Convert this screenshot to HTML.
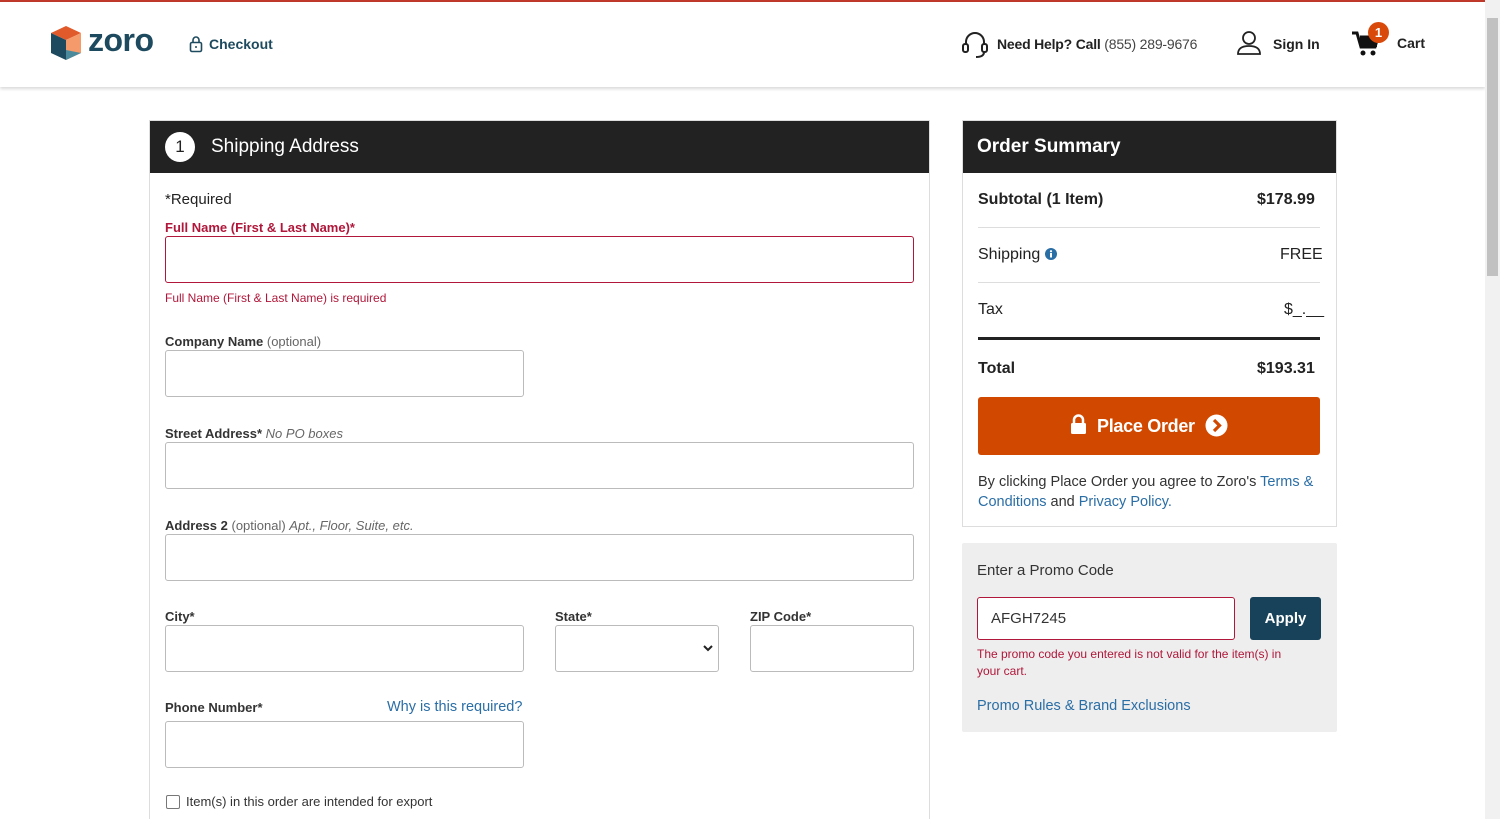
<!DOCTYPE html>
<html style="overflow:hidden;height:819px"><head><meta charset="utf-8"><style>
*{box-sizing:border-box;margin:0;padding:0}
body{width:1500px;height:819px;overflow:hidden;background:#fff;font-family:"Liberation Sans",sans-serif;color:#222;position:relative}
.abs{position:absolute}
.topline{left:0;top:0;width:1485px;height:2px;background:#c0392b}
.header{left:0;top:2px;width:1485px;height:85px;background:#fff;box-shadow:0 2px 3px rgba(0,0,0,.15)}
.sb{left:1485px;top:0;width:15px;height:819px;background:#f1f1f1}
.thumb{left:1487px;top:18px;width:11px;height:258px;background:#c1c1c1}
.panel{border:1px solid #ddd;background:#fff}
.ph{background:#222;color:#fff;font-size:20px;height:52px}
.lbl{font-size:13px;font-weight:bold;color:#333}
.lbl span{font-weight:normal;color:#666}
.inp{border:1px solid #bbb;border-radius:3px;background:#fff}
a,.link{color:#2a6ea6}
</style></head><body>
<div class="abs topline"></div>
<div class="abs header">
 <svg class="abs" style="left:50px;top:24px" width="32" height="34" viewBox="0 0 32 34">
  <polygon points="16,0 31,7 16,14 1,7" fill="#e05a2b"/>
  <polygon points="1,7 16,14 16,34 1,27" fill="#1d4a5e"/>
  <polygon points="16,14 31,7 31,27 16,34" fill="#f59a6a"/>
  <polygon points="16,24 31,27 16,34" fill="#4b8a9c"/>
 </svg>
 <div class="abs" style="left:88px;top:20px;font-size:32px;font-weight:bold;color:#1d4a5e;letter-spacing:-0.5px">zoro</div>
 <svg class="abs" style="left:189px;top:33px" width="14" height="18" viewBox="0 0 14 18"><rect x="1.5" y="7.5" width="11" height="9" rx="1.5" fill="none" stroke="#1d4a5e" stroke-width="1.6"/><path d="M4 7.5V5a3 3 0 0 1 6 0v2.5" fill="none" stroke="#1d4a5e" stroke-width="1.6"/><circle cx="7" cy="12" r="1" fill="#1d4a5e"/></svg>
 <div class="abs" style="left:209px;top:34px;font-size:14px;font-weight:bold;color:#1d4a5e">Checkout</div>
 <svg class="abs" style="left:961px;top:28px" width="28" height="30" viewBox="0 0 28 30"><path d="M5 15V12a9 9 0 0 1 18 0v3" fill="none" stroke="#222" stroke-width="2"/><rect x="2" y="14" width="5" height="8" rx="2" fill="none" stroke="#222" stroke-width="2"/><rect x="21" y="14" width="5" height="8" rx="2" fill="none" stroke="#222" stroke-width="2"/><path d="M23 22c0 4-4 5-8 5" fill="none" stroke="#222" stroke-width="2"/></svg>
 <div class="abs" style="left:997px;top:34px;font-size:14px;letter-spacing:-0.2px"><b>Need Help? Call</b> <span style="color:#444">(855) 289-9676</span></div>
 <svg class="abs" style="left:1236px;top:28px" width="26" height="26" viewBox="0 0 26 26"><circle cx="13" cy="8" r="6" fill="none" stroke="#222" stroke-width="1.8"/><path d="M2 24c0-6 5-8 11-8s11 2 11 8z" fill="none" stroke="#222" stroke-width="1.8"/></svg>
 <div class="abs" style="left:1273px;top:34px;font-size:14px;font-weight:bold">Sign In</div>
 <svg class="abs" style="left:1352px;top:28px" width="28" height="28" viewBox="0 0 28 28"><path d="M0 3h5l4 14h14l3-10H8" fill="none" stroke="#111" stroke-width="3"/><rect x="8" y="8" width="17" height="9" fill="#111"/><circle cx="11" cy="23" r="2.5" fill="#111"/><circle cx="21" cy="23" r="2.5" fill="#111"/></svg>
 <div class="abs" style="left:1368px;top:20px;width:21px;height:21px;border-radius:50%;background:#d94a0a;color:#fff;font-size:13px;font-weight:bold;text-align:center;line-height:21px">1</div>
 <div class="abs" style="left:1397px;top:33px;font-size:14px;font-weight:bold">Cart</div>
</div>
<div class="abs sb"></div><div class="abs thumb"></div>

<div class="abs panel" style="left:149px;top:120px;width:781px;height:720px">
 <div class="ph" style="position:relative">
  <div class="abs" style="left:15px;top:11px;width:30px;height:30px;border-radius:50%;background:#fff;color:#222;font-size:17px;text-align:center;line-height:30px">1</div>
  <div class="abs" style="left:61px;top:15px;font-size:19px">Shipping Address</div>
 </div>
</div>
<div class="abs" style="left:165px;top:191px;font-size:15px">*Required</div>
<div class="abs lbl" style="left:165px;top:220px;color:#b0173a">Full Name (First &amp; Last Name)*</div>
<div class="abs inp" style="left:165px;top:236px;width:749px;height:47px;border-color:#b0173a"></div>
<div class="abs" style="left:165px;top:291px;font-size:12px;color:#b0173a">Full Name (First &amp; Last Name) is required</div>
<div class="abs lbl" style="left:165px;top:334px">Company Name <span>(optional)</span></div>
<div class="abs inp" style="left:165px;top:350px;width:359px;height:47px"></div>
<div class="abs lbl" style="left:165px;top:426px">Street Address* <span><i>No PO boxes</i></span></div>
<div class="abs inp" style="left:165px;top:442px;width:749px;height:47px"></div>
<div class="abs lbl" style="left:165px;top:518px">Address 2 <span>(optional) <i>Apt., Floor, Suite, etc.</i></span></div>
<div class="abs inp" style="left:165px;top:534px;width:749px;height:47px"></div>
<div class="abs lbl" style="left:165px;top:609px">City*</div>
<div class="abs inp" style="left:165px;top:625px;width:359px;height:47px"></div>
<div class="abs lbl" style="left:555px;top:609px">State*</div>
<div class="abs inp" style="left:555px;top:625px;width:164px;height:47px"><svg class="abs" style="left:147px;top:19px" width="10" height="8" viewBox="0 0 10 8"><path d="M1 1l4 4 4-4" fill="none" stroke="#222" stroke-width="2"/></svg></div>
<div class="abs lbl" style="left:750px;top:609px">ZIP Code*</div>
<div class="abs inp" style="left:750px;top:625px;width:164px;height:47px"></div>
<div class="abs lbl" style="left:165px;top:700px">Phone Number*</div>
<div class="abs link" style="left:387px;top:699px;font-size:14.5px">Why is this required?</div>
<div class="abs inp" style="left:165px;top:721px;width:359px;height:47px"></div>
<div class="abs" style="left:166px;top:795px;width:14px;height:14px;border:1px solid #777;border-radius:2px"></div>
<div class="abs" style="left:186px;top:794px;font-size:13px;color:#333">Item(s) in this order are intended for export</div>

<div class="abs panel" style="left:962px;top:120px;width:375px;height:407px">
 <div class="ph" style="position:relative"><div class="abs" style="left:14px;top:15px;font-weight:bold;font-size:19px">Order Summary</div></div>
</div>
<div class="abs" style="left:978px;top:191px;font-size:16px;font-weight:bold">Subtotal (1 Item)</div>
<div class="abs" style="left:1257px;top:191px;font-size:16px;font-weight:bold">$178.99</div>
<div class="abs" style="left:978px;top:227px;width:342px;height:1px;background:#ddd"></div>
<div class="abs" style="left:978px;top:246px;font-size:16px">Shipping <svg width="12" height="12" viewBox="0 0 12 12" style="vertical-align:-1px"><circle cx="6" cy="6" r="6" fill="#2a6ea6"/><rect x="5" y="5" width="2" height="4.5" fill="#fff"/><circle cx="6" cy="3.2" r="1.1" fill="#fff"/></svg></div>
<div class="abs" style="left:1280px;top:246px;font-size:16px">FREE</div>
<div class="abs" style="left:978px;top:282px;width:342px;height:1px;background:#ddd"></div>
<div class="abs" style="left:978px;top:301px;font-size:16px">Tax</div>
<div class="abs" style="left:1284px;top:301px;font-size:16px">$_.__</div>
<div class="abs" style="left:978px;top:337px;width:342px;height:3px;background:#222"></div>
<div class="abs" style="left:978px;top:360px;font-size:16px;font-weight:bold">Total</div>
<div class="abs" style="left:1257px;top:360px;font-size:16px;font-weight:bold">$193.31</div>
<div class="abs" style="left:978px;top:397px;width:342px;height:58px;background:#d14900;border-radius:3px;color:#fff;font-size:18px;font-weight:bold">
 <svg class="abs" style="left:92px;top:17px" width="17" height="20" viewBox="0 0 17 20"><path d="M4 9V6a4.5 4.5 0 0 1 9 0v3" fill="none" stroke="#fff" stroke-width="2.5"/><rect x="1" y="9" width="15" height="11" rx="1.5" fill="#fff"/></svg>
 <div class="abs" style="left:119px;top:19px;letter-spacing:-0.3px">Place Order</div>
 <svg class="abs" style="left:227px;top:17px" width="23" height="23" viewBox="0 0 23 23"><circle cx="11.5" cy="11.5" r="11" fill="#fff"/><path d="M9 6l5.5 5.5L9 17" fill="none" stroke="#d14900" stroke-width="3.2"/></svg>
</div>
<div class="abs" style="left:978px;top:472px;width:350px;font-size:14.5px;line-height:20px;color:#333">By clicking Place Order you agree to Zoro's <span class="link">Terms &amp; Conditions</span> and <span class="link">Privacy Policy.</span></div>

<div class="abs" style="left:962px;top:543px;width:375px;height:189px;background:#eeeeee;border-radius:2px"></div>
<div class="abs" style="left:977px;top:562px;font-size:15px;color:#333">Enter a Promo Code</div>
<div class="abs inp" style="left:977px;top:597px;width:258px;height:43px;border-color:#b0173a;font-size:15px;padding:12px 13px;color:#333">AFGH7245</div>
<div class="abs" style="left:1250px;top:597px;width:71px;height:43px;background:#17425a;border-radius:3px;color:#fff;font-size:15px;font-weight:bold;text-align:center;line-height:43px">Apply</div>
<div class="abs" style="left:977px;top:646px;width:330px;font-size:12px;line-height:17px;color:#b0173a">The promo code you entered is not valid for the item(s) in your cart.</div>
<div class="abs link" style="left:977px;top:698px;font-size:14.5px">Promo Rules &amp; Brand Exclusions</div>
</body></html>
